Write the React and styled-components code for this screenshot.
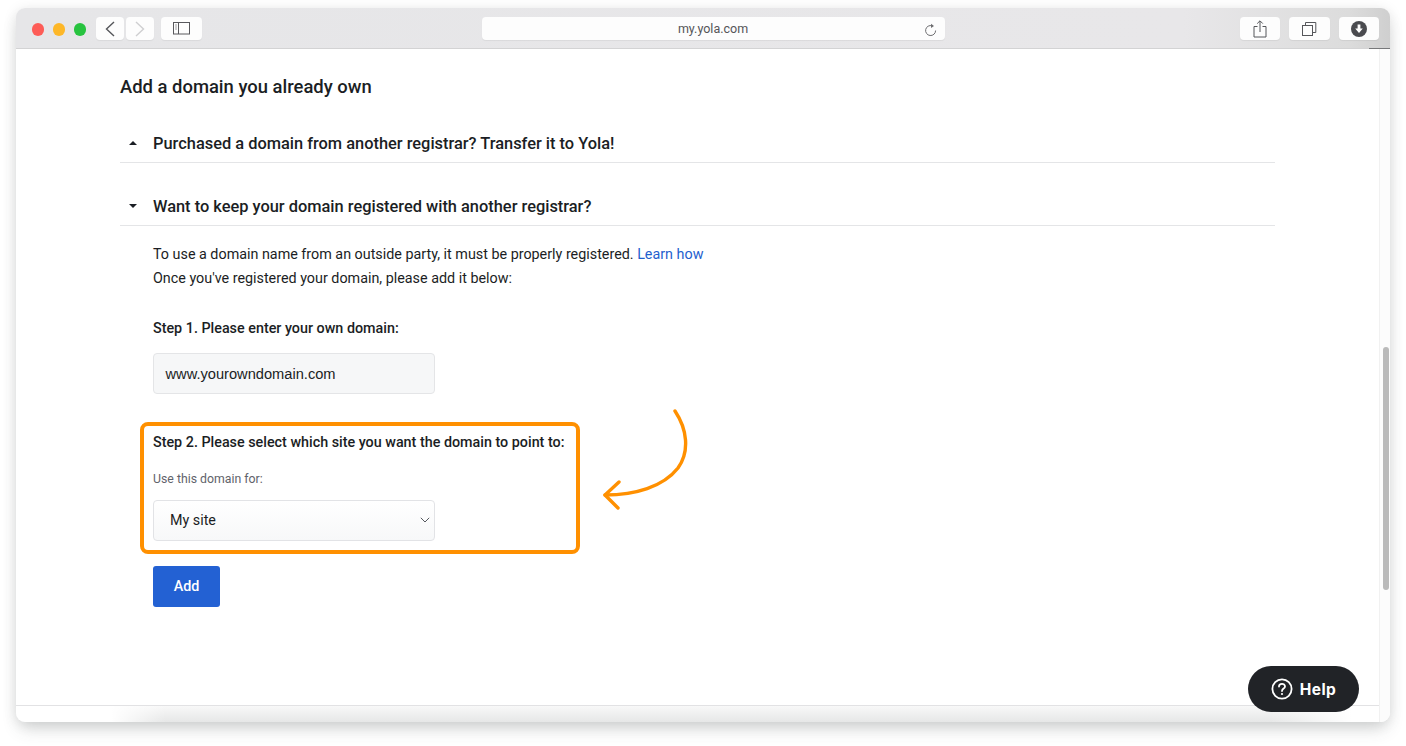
import React from 'react'
import styled, { createGlobalStyle } from 'styled-components'

const Global = createGlobalStyle`
  html, body { margin: 0; padding: 0; background: #fff; height: 100%; overflow: hidden; }
  body { font-family: Roboto, "Liberation Sans", sans-serif; color: #1b1e24; }
  * { box-sizing: border-box; }
`

function App() {
    return (
        <Page>
            <Global />
            <Window>
                <Toolbar>
                    <Lights>
                        <Light color="#fd5c57" />
                        <Light color="#fdb728" />
                        <Light color="#27c33f" />
                    </Lights>
                    <NavButton>
                        <svg width="12" height="16" viewBox="0 0 12 16" fill="none" stroke="#55565a" strokeWidth="1.4">
                            <path d="M10 1 L2.5 8 L10 15" />
                        </svg>
                    </NavButton>
                    <NavButton>
                        <svg width="12" height="16" viewBox="0 0 12 16" fill="none" stroke="#cfcfd1" strokeWidth="1.4">
                            <path d="M2 1 L9.5 8 L2 15" />
                        </svg>
                    </NavButton>
                    <SideButton>
                        <svg width="18" height="13" viewBox="0 0 18 13" fill="none" stroke="#58585c" strokeWidth="1">
                            <rect x="0.5" y="0.5" width="16" height="11.5" />
                            <path d="M5.5 0.5 V12" />
                            <path d="M2 3 H4 M2 5 H4 M2 7 H4" stroke="#a0a0a3" />
                        </svg>
                    </SideButton>
                    <AddressSlot>
                        <Address>
                            <AddressText>my.yola.com</AddressText>
                            <Reload>
                                <svg width="13" height="14" viewBox="0 0 13 14" fill="none" stroke="#6d6d70" strokeWidth="1">
                                    <path d="M8.2 2.8 A5 5 0 1 0 11.6 7.5" />
                                    <path d="M7 0.8 L10 2.9 L7 4.9 Z" fill="#6d6d70" stroke="none" />
                                </svg>
                            </Reload>
                        </Address>
                    </AddressSlot>
                    <ToolActions>
                        <ToolButton>
                            <svg width="14" height="18" viewBox="0 0 14 18" fill="none" stroke="#55565a" strokeWidth="1">
                                <path d="M4.5 6.5 H1 V17 H13 V6.5 H9.5" />
                                <path d="M7 12 V1 M4.2 3.6 L7 0.8 L9.8 3.6" />
                            </svg>
                        </ToolButton>
                        <ToolButton>
                            <svg width="15" height="14" viewBox="0 0 15 14" fill="none" stroke="#55565a" strokeWidth="1">
                                <rect x="0.5" y="3.5" width="10" height="10" />
                                <path d="M3.5 3.5 V0.5 H13.8 V10.5 H10.5" />
                            </svg>
                        </ToolButton>
                        <ToolButton>
                            <svg width="16" height="16" viewBox="0 0 16 16">
                                <circle cx="8" cy="8" r="8" fill="#4a4b4f" />
                                <path d="M6.6 3.5 H9.4 V7.5 H11.8 L8 12 L4.2 7.5 H6.6 Z" fill="#fff" />
                            </svg>
                        </ToolButton>
                    </ToolActions>
                </Toolbar>
                <Body>
                    <Main>
                        <Heading>Add a domain you already own</Heading>
                        <AccordionRow>
                            <Caret up />
                            Purchased a domain from another registrar? Transfer it to Yola!
                        </AccordionRow>
                        <AccordionRow second>
                            <Caret />
                            Want to keep your domain registered with another registrar?
                        </AccordionRow>
                        <Panel>
                            <Copy>
                                To use a domain name from an outside party, it must be properly registered. <InlineLink>Learn how</InlineLink>
                            </Copy>
                            <Copy>Once you've registered your domain, please add it below:</Copy>
                            <StepLabel>Step 1. Please enter your own domain:</StepLabel>
                            <DomainField>www.yourowndomain.com</DomainField>
                            <Highlight>
                                <StepLabel flat>Step 2. Please select which site you want the domain to point to:</StepLabel>
                                <SmallLabel>Use this domain for:</SmallLabel>
                                <SiteSelect>
                                    My site
                                    <svg width="10" height="6" viewBox="0 0 10 6" fill="none" stroke="#55585e" strokeWidth="1">
                                        <path d="M0.8 0.8 L5 5 L9.2 0.8" />
                                    </svg>
                                </SiteSelect>
                            </Highlight>
                            <AddButton>Add</AddButton>
                        </Panel>
                        <Arrow width="90" height="104" viewBox="0 0 90 104" fill="none" stroke="#ff9000" strokeWidth="3.4" strokeLinecap="round" strokeLinejoin="round">
                            <path d="M72 2 C84 20 87 42 75 59 C60 78 32 86 2 86" />
                            <path d="M16 73 L2 86 L15 99" />
                        </Arrow>
                    </Main>
                    <Track>
                        <Thumb />
                    </Track>
                    <Footer />
                </Body>
                <HelpButton>
                    <svg width="22" height="22" viewBox="0 0 22 22" fill="none" stroke="#fff" strokeWidth="1.8">
                        <circle cx="11" cy="11" r="9.6" />
                        <path d="M8 8.6 C8 4.9 14 4.9 14 8.4 C14 10.6 11 10.6 11 13" strokeLinecap="round" />
                        <circle cx="11" cy="16" r="1.1" fill="#fff" stroke="none" />
                    </svg>
                    Help
                </HelpButton>
            </Window>
        </Page>
    )
}

const Page = styled.div`
    width: 1406px;
    height: 746px;
    padding: 8px 16px 24px;
`
const Window = styled.div`
    position: relative;
    height: 714px;
    display: flex;
    flex-direction: column;
    background: #fff;
    border-radius: 9px;
    box-shadow: 0 10px 18px -4px rgba(60, 70, 70, 0.2), 0 2px 14px rgba(0, 0, 0, 0.1);
`
const Toolbar = styled.div`
    height: 41px;
    flex-shrink: 0;
    display: flex;
    align-items: flex-start;
    padding: 9px 0 0 15.5px;
    background:
        linear-gradient(#77787a, #77787a) right bottom / 21px 1px no-repeat,
        linear-gradient(#d3d3d4, #d3d3d4) left bottom / 100% 1px no-repeat,
        linear-gradient(90deg, #e6e6e8 0%, #e8e7e9 85%, #dcdcdc 97%, #cfcfcf 100%);
    border-radius: 9px 9px 0 0;
`
const Lights = styled.div`
    display: flex;
    gap: 8.5px;
    padding-top: 6px;
    margin-right: 10px;
`
const Light = styled.span`
    width: 12.5px;
    height: 12.5px;
    border-radius: 50%;
    background: ${p => p.color};
`
const ToolSurface = styled.div`
    height: 23px;
    display: flex;
    align-items: center;
    justify-content: center;
    background: #fdfdfd;
    border-radius: 4px;
    box-shadow: 0 1px 1px rgba(0, 0, 0, 0.06);
`
const NavButton = styled(ToolSurface)`
    width: 28px;
    margin-right: 2px;
`
const SideButton = styled(ToolSurface)`
    width: 41px;
    margin-left: 5px;
`
const AddressSlot = styled.div`
    margin-left: 279.5px;
`
const Address = styled(ToolSurface)`
    position: relative;
    width: 463px;
`
const AddressText = styled.span`
    font-size: 12.5px;
    color: #555558;
`
const Reload = styled.span`
    position: absolute;
    right: 8px;
    top: 6px;
    display: flex;
`
const ToolActions = styled.div`
    margin-left: auto;
    margin-right: 11px;
    display: flex;
    gap: 9px;
`
const ToolButton = styled(ToolSurface)`
    width: 40.5px;
`
const Body = styled.div`
    position: relative;
    flex: 1;
    min-height: 0;
    display: grid;
    grid-template-columns: 1fr 11px;
    grid-template-rows: 1fr 17px;
`
const Main = styled.main`
    position: relative;
    padding: 26px 104px 0;
`
const Heading = styled.h1`
    margin: 0 0 26px;
    font-size: 18.43px;
    line-height: 24px;
    font-weight: 500;
`
const AccordionRow = styled.div`
    display: flex;
    align-items: center;
    height: 38px;
    margin-top: ${p => (p.second ? '25px' : '0')};
    padding-bottom: 1px;
    font-size: 16.4px;
    font-weight: 500;
    border-bottom: 1px solid #e4e5e7;
`
const Caret = styled.span`
    width: 0;
    height: 0;
    margin: 0 16.5px 0 8.5px;
    border-left: 4px solid transparent;
    border-right: 4px solid transparent;
    ${p => (p.up ? 'border-bottom: 4px solid #1b1e24;' : 'border-top: 4px solid #1b1e24;')}
`
const Panel = styled.div`
    padding: 17px 0 0 33px;
`
const Copy = styled.div`
    font-size: 14.34px;
    line-height: 24px;
`
const InlineLink = styled.span`
    color: #1f5fce;
`
const StepLabel = styled.div`
    font-size: 14.34px;
    line-height: 20px;
    font-weight: 500;
    margin-top: ${p => (p.flat ? '0' : '28px')};
    margin-bottom: ${p => (p.flat ? '0' : '14px')};
`
const DomainField = styled.div`
    width: 282px;
    height: 41px;
    display: flex;
    align-items: center;
    padding: 1px 0 0 11.5px;
    font-family: "Liberation Sans", Arial, sans-serif;
    font-size: 14.65px;
    background: #f6f7f8;
    border: 1px solid #e4e5e7;
    border-radius: 4px;
`
const Highlight = styled.div`
    width: 440px;
    height: 132px;
    margin: 28px 0 12px -13px;
    padding: 7px 8px 0 9px;
    border: 4px solid #ff9000;
    border-radius: 8px;
`
const SmallLabel = styled.div`
    margin: 18px 0 13px;
    font-size: 12.3px;
    line-height: 16px;
    color: #5f636b;
`
const SiteSelect = styled.div`
    width: 282px;
    height: 41px;
    display: flex;
    align-items: center;
    justify-content: space-between;
    padding: 0 4px 1px 16px;
    font-size: 14.3px;
    background: linear-gradient(180deg, #fff 0%, #f7f8f9 100%);
    border: 1px solid #e2e3e6;
    border-radius: 4px;
`
const AddButton = styled.button`
    display: block;
    width: 67px;
    height: 41px;
    padding: 0 0 2px;
    font: 500 14.3px Roboto, sans-serif;
    color: #fff;
    background: #2361d3;
    border: 0;
    border-radius: 3px;
`
const Arrow = styled.svg`
    position: absolute;
    left: 587px;
    top: 360px;
`
const Track = styled.div`
    grid-column: 2;
    grid-row: 1 / 3;
    z-index: 1;
    background: #fcfcfc;
    border-left: 1px solid #f1f1f1;
    border-radius: 0 0 9px 0;
`
const Thumb = styled.div`
    width: 6.5px;
    height: 243px;
    margin: 298px 0 0 2.5px;
    background: #bababa;
    border-radius: 3px;
`
const Footer = styled.div`
    grid-column: 1;
    grid-row: 2;
    border-top: 1px solid #e2e2e4;
    border-radius: 0 0 0 9px;
    background:
        linear-gradient(90deg, #fff 7%, rgba(255, 255, 255, 0) 11%, rgba(255, 255, 255, 0) 92%, #fff 98%),
        linear-gradient(180deg, #f8f8f8 0%, #e6e7e7 100%);
`
const HelpButton = styled.div`
    position: absolute;
    left: 1232px;
    top: 658px;
    width: 111px;
    height: 46px;
    display: flex;
    align-items: center;
    justify-content: center;
    gap: 7px;
    font: 700 15.5px Inter, Roboto, sans-serif;
    letter-spacing: 0.4px;
    color: #fff;
    background: #212327;
    border-radius: 23px;
    z-index: 2;
`

export default App
